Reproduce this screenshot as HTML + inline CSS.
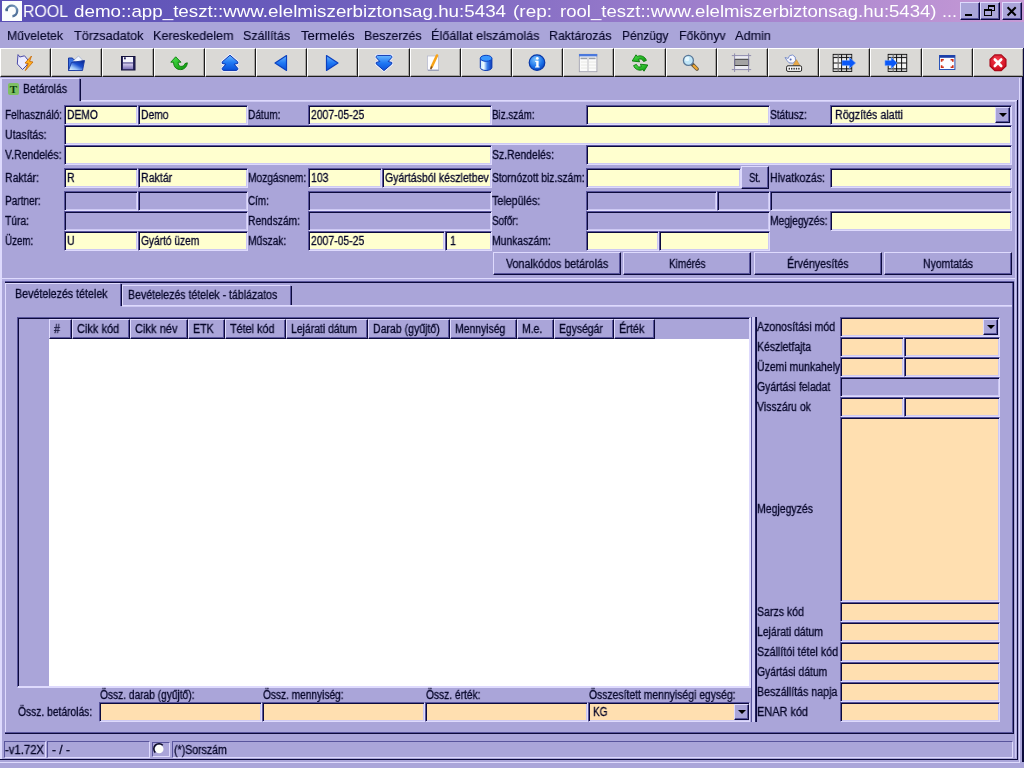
<!DOCTYPE html><html><head><meta charset="utf-8"><title>ROOL</title><style>
html,body{margin:0;padding:0}
body{width:1024px;height:768px;overflow:hidden;background:#aaa5d9;font-family:"Liberation Sans",sans-serif;font-size:12px;color:#07072a;position:relative}
div{position:absolute;box-sizing:border-box;white-space:nowrap}
.t{display:inline-block;will-change:transform;-webkit-text-stroke:0.3px #07072a;transform-origin:0 50%;white-space:nowrap}
.f{border-top:1px solid #58549c;border-left:1px solid #58549c;border-bottom:1px solid #dedafd;border-right:1px solid #dedafd;box-shadow:inset 1px 1px 0 #0c0a3c,inset -1px -1px 0 #cdc9f3;line-height:18px;overflow:hidden}
.sf{top:741px;height:17px;border-top:1px solid #58549c;border-left:1px solid #58549c;border-bottom:1px solid #dedafd;border-right:1px solid #dedafd;line-height:15px}
.y{background:#ffffcf}
.p{background:#ffdfb0}
.g{background:#aaa5d9}
.l{line-height:14px}
.b{border-top:1px solid #dedafd;border-left:1px solid #dedafd;border-bottom:1px solid #0c0a3c;border-right:1px solid #0c0a3c;box-shadow:inset -1px -1px 0 #58549c;background:#aaa5d9}
#title{left:0;top:0;width:1024px;height:22px;background:linear-gradient(90deg,#5b50b6 0%,#6a5cbc 30%,#9a7ccb 65%,#c79ad6 100%);color:#fff;font-size:17px;line-height:21px}
.tt{-webkit-text-stroke:0}
#menu{left:0;top:23px;width:1024px;height:26px;font-size:13px;line-height:26px}
.m{-webkit-text-stroke:0.15px #07072a}
.tb{top:48px;height:29px;background:#dad9d6;border-top:1px solid #fff;border-left:1px solid #fff;border-bottom:1px solid #1c1c1c;border-right:1px solid #1c1c1c;box-shadow:inset -1px -1px 0 #a4a2a0}
.wb{top:2px;height:18px;width:20px;background:#aaa5d9;border-top:1px solid #dedafd;border-left:1px solid #dedafd;border-bottom:1px solid #0c0a3c;border-right:1px solid #0c0a3c;box-shadow:inset -1px -1px 0 #58549c}
.ar{background:#aaa5d9;border-top:1px solid #dedafd;border-left:1px solid #dedafd;border-bottom:1px solid #0c0a3c;border-right:1px solid #0c0a3c;box-shadow:inset -1px -1px 0 #58549c}
.ar:after{content:"";position:absolute;left:3px;top:5px;border-left:4px solid transparent;border-right:4px solid transparent;border-top:4px solid #000}
.th{top:319px;height:20px;background:#aaa5d9;border-top:1px solid #dedafd;border-left:1px solid #dedafd;border-bottom:1px solid #0c0a3c;border-right:1px solid #0c0a3c;box-shadow:inset -1px -1px 0 #58549c;line-height:17px}
</style></head><body>
<div id="title"><div style="left:2px;top:1px;width:20px;height:20px;background:#fbfdfd"></div>
<svg style="position:absolute;left:0;top:0" width="24" height="22" viewBox="0 0 24 22"><defs><linearGradient id="lg1" x1="0" y1="0" x2="1" y2="1"><stop offset="0" stop-color="#4a6c94"/><stop offset="0.5" stop-color="#7a9cc0"/><stop offset="1" stop-color="#40608a"/></linearGradient></defs><path d="M6.6,10.2 A5.3,5.3 0 1 1 12.4,16.2" fill="none" stroke="url(#lg1)" stroke-width="2.4"/><rect x="5.4" y="8.6" width="2.6" height="2.6" fill="#4a6a90"/></svg>
<div style="left:23px;top:1px"><span class="t tt" style="transform:scaleX(0.9340)">ROOL</span></div>
<div style="left:73.5px;top:1px"><span class="t tt" style="transform:scaleX(1.1043)">demo::app_teszt::www.elelmiszerbiztonsag.hu:5434</span></div>
<div style="left:512.5px;top:1px"><span class="t tt" style="transform:scaleX(1.1157)">(rep:</span></div>
<div style="left:560px;top:1px"><span class="t tt" style="transform:scaleX(1.0917)">rool_teszt::www.elelmiszerbiztonsag.hu:5434)</span></div>
<div style="left:942px;top:1px"><span class="t tt" style="transform:scaleX(1.0585)">...</span></div>
<div class="wb" style="left:960px;width:20px"><div style="left:4px;top:11px;width:7px;height:2px;background:#000"></div></div>
<div class="wb" style="left:980px;width:20px"><div style="left:7px;top:2px;width:7px;height:6px;border:1px solid #000;border-top-width:2px"></div><div style="left:3px;top:6px;width:8px;height:7px;border:1px solid #000;border-top-width:2px;background:#aaa5d9"></div></div>
<div class="wb" style="left:1002px;width:20px"><svg style="position:absolute;left:0;top:0" width="18" height="16" viewBox="0 0 18 16"><path d="M5.3,5 L12,11.8 M12,5 L5.3,11.8" stroke="#000" stroke-width="2" stroke-linecap="square"/></svg></div></div>
<div id="menu"><div style="left:6.5px;top:0"><span class="t m" style="transform:scaleX(0.9452)">Műveletek</span></div><div style="left:73.5px;top:0"><span class="t m" style="transform:scaleX(0.9716)">Törzsadatok</span></div><div style="left:152.5px;top:0"><span class="t m" style="transform:scaleX(0.9688)">Kereskedelem</span></div><div style="left:243.0px;top:0"><span class="t m" style="transform:scaleX(0.9566)">Szállítás</span></div><div style="left:300.5px;top:0"><span class="t m" style="transform:scaleX(1.0145)">Termelés</span></div><div style="left:363.5px;top:0"><span class="t m" style="transform:scaleX(0.9474)">Beszerzés</span></div><div style="left:430.5px;top:0"><span class="t m" style="transform:scaleX(0.9751)">Élőállat elszámolás</span></div><div style="left:549.0px;top:0"><span class="t m" style="transform:scaleX(0.9506)">Raktározás</span></div><div style="left:622.0px;top:0"><span class="t m" style="transform:scaleX(0.9192)">Pénzügy</span></div><div style="left:679.0px;top:0"><span class="t m" style="transform:scaleX(0.9465)">Főkönyv</span></div><div style="left:735.0px;top:0"><span class="t m" style="transform:scaleX(0.9770)">Admin</span></div></div>
<div class="tb" style="left:0px;width:51px"></div>
<div class="tb" style="left:51px;width:51px"></div>
<div class="tb" style="left:102px;width:52px"></div>
<div class="tb" style="left:154px;width:51px"></div>
<div class="tb" style="left:205px;width:51px"></div>
<div class="tb" style="left:256px;width:51px"></div>
<div class="tb" style="left:307px;width:51px"></div>
<div class="tb" style="left:358px;width:52px"></div>
<div class="tb" style="left:410px;width:51px"></div>
<div class="tb" style="left:461px;width:51px"></div>
<div class="tb" style="left:512px;width:51px"></div>
<div class="tb" style="left:563px;width:51px"></div>
<div class="tb" style="left:614px;width:52px"></div>
<div class="tb" style="left:666px;width:51px"></div>
<div class="tb" style="left:717px;width:51px"></div>
<div class="tb" style="left:768px;width:51px"></div>
<div class="tb" style="left:819px;width:51px"></div>
<div class="tb" style="left:870px;width:52px"></div>
<div class="tb" style="left:922px;width:51px"></div>
<div class="tb" style="left:973px;width:51px"></div>
<svg style="position:absolute;left:0;top:48px" width="1024" height="30" viewBox="0 48 1024 30"><defs>
<linearGradient id="gb" x1="0" y1="0" x2="0" y2="1"><stop offset="0" stop-color="#6ab8ff"/><stop offset="0.5" stop-color="#1f78f4"/><stop offset="1" stop-color="#0a50d8"/></linearGradient>
<linearGradient id="gbh" x1="0" y1="0" x2="1" y2="0"><stop offset="0" stop-color="#c8ecff"/><stop offset="0.3" stop-color="#f0fcff"/><stop offset="0.6" stop-color="#3a80ec"/><stop offset="1" stop-color="#0a38b8"/></linearGradient>
<linearGradient id="gfl" x1="0" y1="1" x2="0.9" y2="0"><stop offset="0" stop-color="#f4faff"/><stop offset="0.3" stop-color="#9cc4f8"/><stop offset="0.6" stop-color="#1c50d0"/><stop offset="1" stop-color="#0a2890"/></linearGradient>
<linearGradient id="gfp" x1="0" y1="0" x2="0" y2="1"><stop offset="0" stop-color="#d8d0f0"/><stop offset="1" stop-color="#7a70b8"/></linearGradient>
<radialGradient id="gi" cx="0.4" cy="0.3" r="0.8"><stop offset="0" stop-color="#7cc4ff"/><stop offset="0.6" stop-color="#1870e8"/><stop offset="1" stop-color="#0838b0"/></radialGradient>
<radialGradient id="gr" cx="0.45" cy="0.35" r="0.7"><stop offset="0" stop-color="#f84050"/><stop offset="1" stop-color="#c80818"/></radialGradient>
<linearGradient id="gg" x1="0" y1="0" x2="1" y2="1"><stop offset="0" stop-color="#50e850"/><stop offset="1" stop-color="#089008"/></linearGradient>
</defs><polygon points="18,54.6 19.8,57 24.5,55.8 28,60 27,65 22.5,69.5 17.3,64" fill="#ececff" stroke="#4a4aa8" stroke-width="1"/><polygon points="31.5,56 25,63 28.3,63.6 25.3,70.6 33,62 29.6,61.4" fill="#ffb020" stroke="#c86400" stroke-width="0.8"/><path d="M68.5,58 L72.5,58 L73.5,59.5 L75,59.5 L75,70.5 L68.5,70.5 Z" fill="#3a70e0" stroke="#1838a0" stroke-width="1"/><polygon points="73,61 78.5,56 82,59.5 82,62" fill="#f4f8ff" stroke="#8898c8" stroke-width="0.6"/><polygon points="71.5,62.5 84.5,60.5 82.5,70.5 68.5,70.5" fill="url(#gfl)" stroke="#1838a0" stroke-width="0.9"/><rect x="121.5" y="56.5" width="13.5" height="13.5" fill="#2a2860" stroke="#14123c" stroke-width="1"/><rect x="123" y="57" width="10" height="5" fill="#f4f4fc"/><rect x="124" y="57.3" width="1.8" height="2" fill="#2a2860"/><rect x="123" y="62" width="10" height="1.6" fill="#8a86b8"/><rect x="123" y="63.6" width="10" height="5.6" fill="url(#gfp)"/><path d="M175.7,56.8 L170.8,62.2 L173.6,62.2 C173.6,67.5 177,69.6 180.6,69.6 C184.6,69.6 187.2,66.2 187.3,62.8 L185,63.6 C184.4,65.6 182.6,66.6 180.8,66.4 C178.8,66.2 178.2,64.6 178.2,62.2 L181,62.2 Z" fill="url(#gg)" stroke="#087808" stroke-width="0.9" stroke-linejoin="round"/><polygon points="230,55.2 237.8,61.9 237.8,63.4 234.2,64.3 237.8,68.3 237.8,69.5 236.6,70.4 223.4,70.4 222.2,69.5 222.2,68.3 225.8,64.3 222.2,63.4 222.2,61.9" fill="none" stroke="#eef2ff" stroke-width="2.6" stroke-linejoin="round"/><polygon points="230,55.2 237.8,61.9 237.8,63.4 234.2,64.3 237.8,68.3 237.8,69.5 236.6,70.4 223.4,70.4 222.2,69.5 222.2,68.3 225.8,64.3 222.2,63.4 222.2,61.9" fill="url(#gb)" stroke="#0a34b0" stroke-width="1" stroke-linejoin="round"/><polygon points="275,63 286.5,55.6 286.5,70.4" fill="url(#gb)" stroke="#0a40c0" stroke-width="1.2" stroke-linejoin="round"/><polygon points="338,63 326.5,55.6 326.5,70.4" fill="url(#gb)" stroke="#0a40c0" stroke-width="1.2" stroke-linejoin="round"/><polygon points="384.0,70.6 391.8,63.9 391.8,62.4 388.2,61.5 391.8,57.5 391.8,56.3 390.6,55.4 377.4,55.4 376.2,56.3 376.2,57.5 379.8,61.5 376.2,62.4 376.2,63.9" fill="none" stroke="#eef2ff" stroke-width="2.6" stroke-linejoin="round"/><polygon points="384.0,70.6 391.8,63.9 391.8,62.4 388.2,61.5 391.8,57.5 391.8,56.3 390.6,55.4 377.4,55.4 376.2,56.3 376.2,57.5 379.8,61.5 376.2,62.4 376.2,63.9" fill="url(#gb)" stroke="#0a34b0" stroke-width="1" stroke-linejoin="round"/><rect x="427.5" y="56" width="11" height="14" fill="#fdfdff" stroke="#b8bcd0" stroke-width="0.8"/><line x1="428" y1="70.3" x2="438.8" y2="70.3" stroke="#8088a8" stroke-width="0.8"/><line x1="437" y1="55.5" x2="431.6" y2="67" stroke="#f8a418" stroke-width="2.6" stroke-linecap="round"/><line x1="431.6" y1="67" x2="430.9" y2="68.6" stroke="#805020" stroke-width="1.6" stroke-linecap="round"/><path d="M480.3,58.5 L480.3,67.5 A5.8,3 0 0 0 491.9,67.5 L491.9,58.5 Z" fill="url(#gbh)" stroke="#0a38b0" stroke-width="1"/><ellipse cx="486.1" cy="58.3" rx="5.8" ry="3" fill="#3a98ff" stroke="#0a40c0" stroke-width="1"/><circle cx="537" cy="62.6" r="7.8" fill="url(#gi)" stroke="#0838a8" stroke-width="1.2"/><circle cx="537.3" cy="58.4" r="1.4" fill="#fff"/><path d="M535.2,60.8 L538.6,60.8 L538.6,66.4 L539.6,66.4 L539.6,67.6 L535,67.6 L535,66.4 L536.2,66.4 L536.2,62 L535.2,62 Z" fill="#fff"/><rect x="579.3" y="54.3" width="17.6" height="17.4" fill="#fbfbfb" stroke="#9a9aaa" stroke-width="0.8"/><rect x="579" y="54" width="18.2" height="2.4" fill="#4a78dc"/><rect x="580.5" y="57.6" width="6.6" height="1.6" fill="#9aa0a8"/><rect x="589" y="57.6" width="6.6" height="1.6" fill="#9aa0a8"/><line x1="588" y1="57" x2="588" y2="71" stroke="#c8c8cc" stroke-width="1.2"/><g stroke="#e4e4e0" stroke-width="0.8"><line x1="581" y1="62" x2="587" y2="62"/><line x1="581" y1="65" x2="587" y2="65"/><line x1="581" y1="68" x2="587" y2="68"/><line x1="589" y1="62" x2="596" y2="62"/><line x1="589" y1="65" x2="596" y2="65"/><line x1="589" y1="68" x2="596" y2="68"/></g><path d="M646.4,60.4 C645,56.6 641,54.8 637.2,56.4 L636,54.8 L632.2,61 L639.6,61.8 L638.6,59.4 C640.4,58.4 642.6,59 643.6,61.6 Z" fill="url(#gg)" stroke="#087808" stroke-width="0.9" stroke-linejoin="round"/><path d="M633.6,65.6 C635,69.4 639,71.2 642.8,69.6 L644,71.2 L647.8,65 L640.4,64.2 L641.4,66.6 C639.6,67.6 637.4,67 636.4,64.4 Z" fill="url(#gg)" stroke="#087808" stroke-width="0.9" stroke-linejoin="round"/><line x1="692.4" y1="64.4" x2="697" y2="69" stroke="#6a5a40" stroke-width="3.8" stroke-linecap="round"/><line x1="693.8" y1="65.8" x2="696.8" y2="68.8" stroke="#f0a830" stroke-width="2.2" stroke-linecap="round"/><circle cx="688.4" cy="60.4" r="5" fill="#bfe6f8" stroke="#5a7898" stroke-width="1.3"/><circle cx="687.2" cy="59" r="2.2" fill="#e6f8ff"/><rect x="735" y="56" width="13.5" height="13" fill="#ececf2"/><rect x="734.6" y="59.3" width="14" height="6.2" fill="#a4a4a4" stroke="#3c3c3c" stroke-width="1"/><g stroke="#8480a8" stroke-width="1" opacity="0.85"><line x1="731.8" y1="55.6" x2="751.2" y2="55.6"/><line x1="731.8" y1="69.6" x2="751.2" y2="69.6"/><line x1="734.6" y1="53.4" x2="734.6" y2="72"/><line x1="748.6" y1="53.4" x2="748.6" y2="72"/></g><path d="M785,57.5 L787,60.5 L789,62.8 L793,63.2 L795.6,60.8 L795.2,57 L792.6,55 L789.6,55.6 L788.2,58.4 Z" fill="#f8f8ff" stroke="#7088c8" stroke-width="0.9"/><circle cx="790.6" cy="59.6" r="1" fill="#5068b0"/><polygon points="796.4,59.6 800,65.6 792.8,65.6" fill="#e8a848" stroke="#b88838" stroke-width="0.5"/><rect x="786.6" y="65.8" width="15" height="5.6" rx="1.4" fill="#fff" stroke="#222" stroke-width="1"/><g fill="#333"><rect x="788.6" y="67.8" width="1.4" height="1.8"/><rect x="791" y="67.8" width="1.4" height="1.8"/><rect x="793.4" y="67.8" width="1.4" height="1.8"/><rect x="795.8" y="67.8" width="1.4" height="1.8"/><rect x="798.2" y="67.8" width="1.4" height="1.8"/></g><rect x="833.2" y="54.4" width="18.5" height="17" fill="#f4f4f4" stroke="#111" stroke-width="1"/><rect x="833.7" y="54.9" width="17.5" height="2.6" fill="#d0d0d0"/><rect x="833.7" y="69" width="17.5" height="2" fill="#d0d0d0"/><g stroke="#111" stroke-width="1"><line x1="841.6" y1="54.4" x2="841.6" y2="71.4"/><line x1="846.6" y1="54.4" x2="846.6" y2="71.4"/><line x1="833.2" y1="57.6" x2="851.7" y2="57.6"/><line x1="833.2" y1="63" x2="851.7" y2="63"/><line x1="833.2" y1="68.8" x2="851.7" y2="68.8"/></g><line x1="838.2" y1="54.4" x2="838.2" y2="71.4" stroke="#777" stroke-width="1.2"/><polygon points="842,60.4 849.4,60.4 849.4,57.4 855.6,63 849.4,68.6 849.4,65.6 842,65.6" fill="#0a58f8" stroke="#6aa0ff" stroke-width="0.6"/><rect x="888.2" y="54.4" width="18.5" height="17" fill="#f4f4f4" stroke="#111" stroke-width="1"/><rect x="888.7" y="54.9" width="17.5" height="2.6" fill="#d0d0d0"/><rect x="888.7" y="69" width="17.5" height="2" fill="#d0d0d0"/><g stroke="#111" stroke-width="1"><line x1="896.6" y1="54.4" x2="896.6" y2="71.4"/><line x1="901.6" y1="54.4" x2="901.6" y2="71.4"/><line x1="888.2" y1="57.6" x2="906.7" y2="57.6"/><line x1="888.2" y1="63" x2="906.7" y2="63"/><line x1="888.2" y1="68.8" x2="906.7" y2="68.8"/></g><line x1="893.2" y1="54.4" x2="893.2" y2="71.4" stroke="#777" stroke-width="1.2"/><polygon points="885,60.4 891.2,60.4 891.2,57.4 897.2,63 891.2,68.6 891.2,65.6 885,65.6" fill="#0a58f8" stroke="#6aa0ff" stroke-width="0.6"/><rect x="939.5" y="55.5" width="15.4" height="14" fill="#fcfcff" stroke="#2a54b8" stroke-width="1"/><rect x="939.5" y="55.2" width="15.4" height="2.6" fill="#1c3ea8"/><g fill="#d03018"><polygon points="940.8,59 943.8,59 943.8,60.4 942.4,60.4 942.4,61.8 940.8,61.8"/><polygon points="953.6,59 950.6,59 950.6,60.4 952,60.4 952,61.8 953.6,61.8"/><polygon points="940.8,68 943.8,68 943.8,66.6 942.4,66.6 942.4,65.2 940.8,65.2"/><polygon points="953.6,68 950.6,68 950.6,66.6 952,66.6 952,65.2 953.6,65.2"/></g><polygon points="994.7,54.9 1001.3,54.9 1006,59.5 1006,66 1001.3,70.6 994.7,70.6 990,66 990,59.5" fill="url(#gr)" stroke="#a80818" stroke-width="1.1" stroke-linejoin="round"/><g stroke="#fff" stroke-width="2.6" stroke-linecap="round"><line x1="994.8" y1="59.5" x2="1001.2" y2="66"/><line x1="1001.2" y1="59.5" x2="994.8" y2="66"/></g></svg>
<div style="left:0px;top:78px;width:2px;height:681px;background:#dedafd"></div>
<div style="left:1019px;top:78px;width:1px;height:685px;background:#dedafd"></div>
<div style="left:1022px;top:77px;width:2px;height:685px;background:#0c0a3c"></div>
<div style="left:1023px;top:48px;width:1px;height:29px;background:#0c0a3c"></div>
<div style="left:0px;top:762px;width:1020px;height:1px;background:#dedafd"></div>
<div style="left:2px;top:78px;width:77px;height:1px;background:#dedafd"></div>
<div style="left:79px;top:79px;width:1px;height:22px;background:#58549c"></div>
<div style="left:80px;top:79px;width:1px;height:22px;background:#0c0a3c"></div>
<div style="left:81px;top:100px;width:936px;height:1px;background:#dedafd"></div>
<div style="left:81px;top:101px;width:935px;height:1px;background:#cdc9f3"></div>
<div style="left:8px;top:83px;width:11px;height:12px;background:#7fc064;border-radius:2px;font-family:'Liberation Serif',serif;font-weight:bold;font-size:11px;line-height:12px;text-align:center;color:#0a3a0a;letter-spacing:0">T</div>
<div class="l" style="left:23px;top:82px"><span class="t" style="transform:scaleX(0.8679)">Betárolás</span></div>
<div style="left:1015px;top:102px;width:1px;height:656px;background:#cdc9f3"></div>
<div style="left:1017px;top:100px;width:1px;height:660px;background:#0c0a3c"></div>
<div style="left:0px;top:759px;width:1018px;height:1px;background:#0c0a3c"></div>
<div class="l" style="left:4.5px;top:108px"><span class="t" style="transform:scaleX(0.8378)">Felhasználó:</span></div>
<div class="f y" style="left:64px;top:105px;width:74px;height:20px"><div style="left:2px;top:0"><span class="t" style="transform:scaleX(0.8541)">DEMO</span></div></div>
<div class="f y" style="left:138px;top:105px;width:110px;height:20px"><div style="left:2px;top:0"><span class="t" style="transform:scaleX(0.8591)">Demo</span></div></div>
<div class="l" style="left:247.75px;top:108px"><span class="t" style="transform:scaleX(0.8403)">Dátum:</span></div>
<div class="f y" style="left:308px;top:105px;width:184px;height:20px"><div style="left:2px;top:0"><span class="t" style="transform:scaleX(0.8675)">2007-05-25</span></div></div>
<div class="l" style="left:491.75px;top:108px"><span class="t" style="transform:scaleX(0.8172)">Biz.szám:</span></div>
<div class="f y" style="left:586px;top:105px;width:184px;height:20px"></div>
<div class="l" style="left:769.8px;top:108px"><span class="t" style="transform:scaleX(0.8465)">Státusz:</span></div>
<div class="f y" style="left:830px;top:105px;width:182px;height:20px"><div style="left:4px;top:0"><span class="t" style="transform:scaleX(0.8943)">Rögzítés alatti</span></div></div>
<div class="ar" style="left:995px;top:107px;width:15px;height:16px"></div>
<div class="l" style="left:4.5px;top:128px"><span class="t" style="transform:scaleX(0.8765)">Utasítás:</span></div>
<div class="f y" style="left:64px;top:125px;width:948px;height:20px"></div>
<div class="l" style="left:4.5px;top:148px"><span class="t" style="transform:scaleX(0.8791)">V.Rendelés:</span></div>
<div class="f y" style="left:64px;top:145px;width:428px;height:20px"></div>
<div class="l" style="left:491.75px;top:148px"><span class="t" style="transform:scaleX(0.8687)">Sz.Rendelés:</span></div>
<div class="f y" style="left:586px;top:145px;width:426px;height:20px"></div>
<div class="l" style="left:4.5px;top:171px"><span class="t" style="transform:scaleX(0.8790)">Raktár:</span></div>
<div class="f y" style="left:64px;top:168px;width:74px;height:20px"><div style="left:2px;top:0"><span class="t" style="transform:scaleX(0.8850)">R</span></div></div>
<div class="f y" style="left:138px;top:168px;width:110px;height:20px"><div style="left:2px;top:0"><span class="t" style="transform:scaleX(0.8842)">Raktár</span></div></div>
<div class="l" style="left:247.75px;top:171px"><span class="t" style="transform:scaleX(0.8479)">Mozgásnem:</span></div>
<div class="f y" style="left:308px;top:168px;width:74px;height:20px"><div style="left:2px;top:0"><span class="t" style="transform:scaleX(0.8741)">103</span></div></div>
<div class="f y" style="left:382px;top:168px;width:110px;height:20px"><div style="left:2px;top:0"><span class="t" style="transform:scaleX(0.8788)">Gyártásból készletbev</span></div></div>
<div class="l" style="left:491.75px;top:171px"><span class="t" style="transform:scaleX(0.8509)">Stornózott biz.szám:</span></div>
<div class="f y" style="left:586px;top:168px;width:155px;height:20px"></div>
<div class="b" style="left:741px;top:166px;width:28px;height:23px;line-height:21px"><div style="left:7.2px;top:1px"><span class="t" style="transform:scaleX(0.7905)">St.</span></div></div>
<div class="l" style="left:769.8px;top:171px"><span class="t" style="transform:scaleX(0.8868)">Hivatkozás:</span></div>
<div class="f y" style="left:830px;top:168px;width:182px;height:20px"></div>
<div class="l" style="left:4.5px;top:194px"><span class="t" style="transform:scaleX(0.8375)">Partner:</span></div>
<div class="f g" style="left:64px;top:191px;width:74px;height:20px"></div>
<div class="f g" style="left:138px;top:191px;width:110px;height:20px"></div>
<div class="l" style="left:247.75px;top:194px"><span class="t" style="transform:scaleX(0.8191)">Cím:</span></div>
<div class="f g" style="left:308px;top:191px;width:184px;height:20px"></div>
<div class="l" style="left:491.75px;top:194px"><span class="t" style="transform:scaleX(0.8930)">Település:</span></div>
<div class="f g" style="left:586px;top:191px;width:131px;height:20px"></div>
<div class="f g" style="left:717px;top:191px;width:53px;height:20px"></div>
<div class="f g" style="left:770px;top:191px;width:242px;height:20px"></div>
<div class="l" style="left:4.5px;top:214px"><span class="t" style="transform:scaleX(0.8569)">Túra:</span></div>
<div class="f g" style="left:64px;top:211px;width:184px;height:20px"></div>
<div class="l" style="left:247.75px;top:214px"><span class="t" style="transform:scaleX(0.8568)">Rendszám:</span></div>
<div class="f g" style="left:308px;top:211px;width:184px;height:20px"></div>
<div class="l" style="left:491.75px;top:214px"><span class="t" style="transform:scaleX(0.8199)">Sofőr:</span></div>
<div class="f g" style="left:586px;top:211px;width:184px;height:20px"></div>
<div class="l" style="left:769.8px;top:214px"><span class="t" style="transform:scaleX(0.8536)">Megjegyzés:</span></div>
<div class="f y" style="left:830px;top:211px;width:182px;height:20px"></div>
<div class="l" style="left:4.5px;top:234px"><span class="t" style="transform:scaleX(0.8148)">Üzem:</span></div>
<div class="f y" style="left:64px;top:231px;width:74px;height:20px"><div style="left:2px;top:0"><span class="t" style="transform:scaleX(0.8850)">U</span></div></div>
<div class="f y" style="left:138px;top:231px;width:110px;height:20px"><div style="left:2px;top:0"><span class="t" style="transform:scaleX(0.8480)">Gyártó üzem</span></div></div>
<div class="l" style="left:247.75px;top:234px"><span class="t" style="transform:scaleX(0.8561)">Műszak:</span></div>
<div class="f y" style="left:308px;top:231px;width:137px;height:20px"><div style="left:2px;top:0"><span class="t" style="transform:scaleX(0.8675)">2007-05-25</span></div></div>
<div class="f y" style="left:445px;top:231px;width:47px;height:20px"><div style="left:4px;top:0"><span class="t" style="transform:scaleX(0.8850)">1</span></div></div>
<div class="l" style="left:491.75px;top:234px"><span class="t" style="transform:scaleX(0.8637)">Munkaszám:</span></div>
<div class="f y" style="left:586px;top:231px;width:73px;height:20px"></div>
<div class="f y" style="left:659px;top:231px;width:111px;height:20px"></div>
<div class="b" style="left:493px;top:252px;width:128px;height:23px;line-height:21px"><div style="left:11.9px;top:1px"><span class="t" style="transform:scaleX(0.8911)">Vonalkódos betárolás</span></div></div>
<div class="b" style="left:623px;top:252px;width:128px;height:23px;line-height:21px"><div style="left:44.8px;top:1px"><span class="t" style="transform:scaleX(0.8293)">Kimérés</span></div></div>
<div class="b" style="left:754px;top:252px;width:128px;height:23px;line-height:21px"><div style="left:32.2px;top:1px"><span class="t" style="transform:scaleX(0.8881)">Érvényesítés</span></div></div>
<div class="b" style="left:884px;top:252px;width:128px;height:23px;line-height:21px"><div style="left:38.0px;top:1px"><span class="t" style="transform:scaleX(0.8718)">Nyomtatás</span></div></div>
<div style="left:2px;top:278px;width:1013px;height:1px;background:#dedafd"></div>
<div style="left:2px;top:279px;width:1013px;height:2px;background:#b3aee4"></div>
<div style="left:5px;top:281px;width:1009px;height:1px;background:#58549c"></div>
<div style="left:5px;top:282px;width:1009px;height:1px;background:#0c0a3c"></div>
<div style="left:5px;top:283px;width:1px;height:450px;background:#dedafd"></div>
<div style="left:1012px;top:283px;width:1px;height:450px;background:#58549c"></div>
<div style="left:1013px;top:282px;width:1px;height:452px;background:#0c0a3c"></div>
<div style="left:5px;top:732px;width:1008px;height:1px;background:#58549c"></div>
<div style="left:5px;top:733px;width:1009px;height:1px;background:#0c0a3c"></div>
<div style="left:6px;top:283px;width:114px;height:1px;background:#dedafd"></div>
<div style="left:120px;top:284px;width:1px;height:22px;background:#58549c"></div>
<div style="left:121px;top:284px;width:1px;height:22px;background:#0c0a3c"></div>
<div class="l" style="left:14.5px;top:287px"><span class="t" style="transform:scaleX(0.8889)">Bevételezés tételek</span></div>
<div style="left:122px;top:285px;width:1px;height:20px;background:#dedafd"></div>
<div style="left:122px;top:285px;width:168px;height:1px;background:#dedafd"></div>
<div style="left:290px;top:286px;width:1px;height:19px;background:#58549c"></div>
<div style="left:291px;top:286px;width:1px;height:19px;background:#0c0a3c"></div>
<div style="left:122px;top:305px;width:890px;height:1px;background:#dedafd"></div>
<div style="left:122px;top:306px;width:890px;height:1px;background:#cdc9f3"></div>
<div class="l" style="left:127.5px;top:288px"><span class="t" style="transform:scaleX(0.8806)">Bevételezés tételek - táblázatos</span></div>
<div style="left:17px;top:317px;width:734px;height:371px;background:#aaa5d9;border-top:1px solid #58549c;border-left:1px solid #58549c;border-right:2px solid #dedafd;border-bottom:2px solid #dedafd;box-shadow:inset 1px 1px 0 #0c0a3c"></div>
<div style="left:49px;top:339px;width:700px;height:347px;background:#fff"></div>
<div class="th" style="left:49px;width:23px"><div style="left:3.5px;top:1px"><span class="t" style="transform:scaleX(0.8850)">#</span></div></div>
<div class="th" style="left:72px;width:58px"><div style="left:3.5px;top:1px"><span class="t" style="transform:scaleX(0.9171)">Cikk kód</span></div></div>
<div class="th" style="left:130px;width:58px"><div style="left:3.5px;top:1px"><span class="t" style="transform:scaleX(0.9237)">Cikk név</span></div></div>
<div class="th" style="left:188px;width:37px"><div style="left:3.5px;top:1px"><span class="t" style="transform:scaleX(0.8869)">ETK</span></div></div>
<div class="th" style="left:225px;width:61px"><div style="left:3.5px;top:1px"><span class="t" style="transform:scaleX(0.9016)">Tétel kód</span></div></div>
<div class="th" style="left:286px;width:82px"><div style="left:3.5px;top:1px"><span class="t" style="transform:scaleX(0.8679)">Lejárati dátum</span></div></div>
<div class="th" style="left:368px;width:82px"><div style="left:3.5px;top:1px"><span class="t" style="transform:scaleX(0.8786)">Darab (gyűjtő)</span></div></div>
<div class="th" style="left:450px;width:67px"><div style="left:3.5px;top:1px"><span class="t" style="transform:scaleX(0.8668)">Mennyiség</span></div></div>
<div class="th" style="left:517px;width:37px"><div style="left:3.5px;top:1px"><span class="t" style="transform:scaleX(0.8698)">M.e.</span></div></div>
<div class="th" style="left:554px;width:60px"><div style="left:3.5px;top:1px"><span class="t" style="transform:scaleX(0.8640)">Egységár</span></div></div>
<div class="th" style="left:614px;width:41px"><div style="left:3.5px;top:1px"><span class="t" style="transform:scaleX(0.9068)">Érték</span></div></div>
<div class="l" style="left:99.5px;top:688px"><span class="t" style="transform:scaleX(0.8485)">Össz. darab (gyűjtő):</span></div>
<div class="l" style="left:262.5px;top:688px"><span class="t" style="transform:scaleX(0.8441)">Össz. mennyiség:</span></div>
<div class="l" style="left:426px;top:688px"><span class="t" style="transform:scaleX(0.8498)">Össz. érték:</span></div>
<div class="l" style="left:589px;top:688px"><span class="t" style="transform:scaleX(0.8648)">Összesített mennyiségi egység:</span></div>
<div class="l" style="left:17.5px;top:705px"><span class="t" style="transform:scaleX(0.8558)">Össz. betárolás:</span></div>
<div class="f p" style="left:99px;top:702px;width:163px;height:20px"></div>
<div class="f p" style="left:262px;top:702px;width:163px;height:20px"></div>
<div class="f p" style="left:425px;top:702px;width:163px;height:20px"></div>
<div class="f p" style="left:588px;top:702px;width:162px;height:20px"><div style="left:4px;top:0"><span class="t" style="transform:scaleX(0.8363)">KG</span></div></div>
<div class="ar" style="left:734px;top:704px;width:15px;height:16px"></div>
<div style="left:751px;top:317px;width:1px;height:405px;background:#58549c"></div>
<div style="left:752px;top:317px;width:3px;height:405px;background:#cdc9f3"></div>
<div style="left:755px;top:317px;width:1px;height:405px;background:#242262"></div>
<div style="left:756px;top:317px;width:1px;height:405px;background:#0c0a3c"></div>
<div class="l" style="left:757px;top:320px"><span class="t" style="transform:scaleX(0.8815)">Azonosítási mód</span></div>
<div class="l" style="left:757px;top:340px"><span class="t" style="transform:scaleX(0.8737)">Készletfajta</span></div>
<div class="l" style="left:757px;top:360px"><span class="t" style="transform:scaleX(0.8724)">Üzemi munkahely</span></div>
<div class="l" style="left:757px;top:380px"><span class="t" style="transform:scaleX(0.8722)">Gyártási feladat</span></div>
<div class="l" style="left:757px;top:400px"><span class="t" style="transform:scaleX(0.8721)">Visszáru ok</span></div>
<div class="f p" style="left:840px;top:317px;width:160px;height:20px"></div>
<div class="ar" style="left:983px;top:319px;width:15px;height:16px"></div>
<div class="f p" style="left:840px;top:337px;width:64px;height:20px"></div>
<div class="f p" style="left:904px;top:337px;width:96px;height:20px"></div>
<div class="f p" style="left:840px;top:357px;width:64px;height:20px"></div>
<div class="f p" style="left:904px;top:357px;width:96px;height:20px"></div>
<div class="f g" style="left:840px;top:377px;width:160px;height:20px"></div>
<div class="f p" style="left:840px;top:397px;width:64px;height:20px"></div>
<div class="f p" style="left:904px;top:397px;width:96px;height:20px"></div>
<div class="f p" style="left:840px;top:417px;width:160px;height:185px"></div>
<div class="l" style="left:757px;top:502px"><span class="t" style="transform:scaleX(0.8746)">Megjegyzés</span></div>
<div class="l" style="left:757px;top:605px"><span class="t" style="transform:scaleX(0.8790)">Sarzs kód</span></div>
<div class="f p" style="left:840px;top:602px;width:160px;height:20px"></div>
<div class="l" style="left:757px;top:625px"><span class="t" style="transform:scaleX(0.8679)">Lejárati dátum</span></div>
<div class="f p" style="left:840px;top:622px;width:160px;height:20px"></div>
<div class="l" style="left:757px;top:645px"><span class="t" style="transform:scaleX(0.8951)">Szállítói tétel kód</span></div>
<div class="f p" style="left:840px;top:642px;width:160px;height:20px"></div>
<div class="l" style="left:757px;top:665px"><span class="t" style="transform:scaleX(0.8640)">Gyártási dátum</span></div>
<div class="f p" style="left:840px;top:662px;width:160px;height:20px"></div>
<div class="l" style="left:757px;top:685px"><span class="t" style="transform:scaleX(0.8852)">Beszállítás napja</span></div>
<div class="f p" style="left:840px;top:682px;width:160px;height:20px"></div>
<div class="l" style="left:757px;top:705px"><span class="t" style="transform:scaleX(0.9104)">ENAR kód</span></div>
<div class="f p" style="left:840px;top:702px;width:160px;height:20px"></div>
<div class="sf" style="left:4px;width:42px"><div style="left:0px;top:1px"><span class="t" style="transform:scaleX(0.9430)">-v1.72X</span></div></div>
<div class="sf" style="left:47px;width:103px"><div style="left:4px;top:1px"><span class="t" style="transform:scaleX(1.0002)">- / -</span></div></div>
<div class="sf" style="left:152px;top:742px;width:18px;height:15px"></div>
<div class="sf" style="left:172px;width:841px"><div style="left:1px;top:1px"><span class="t" style="transform:scaleX(0.8799)">(*)Sorszám</span></div></div>
<svg style="position:absolute;left:150px;top:740px" width="24" height="18" viewBox="150 740 24 18"><circle cx="159.2" cy="749" r="4.3" fill="#fdfffa"/><path d="M155.3,752.6 A5.2,5.2 0 0 1 162.8,745.2" fill="none" stroke="#0a0a20" stroke-width="1.5"/></svg>
</body></html>
